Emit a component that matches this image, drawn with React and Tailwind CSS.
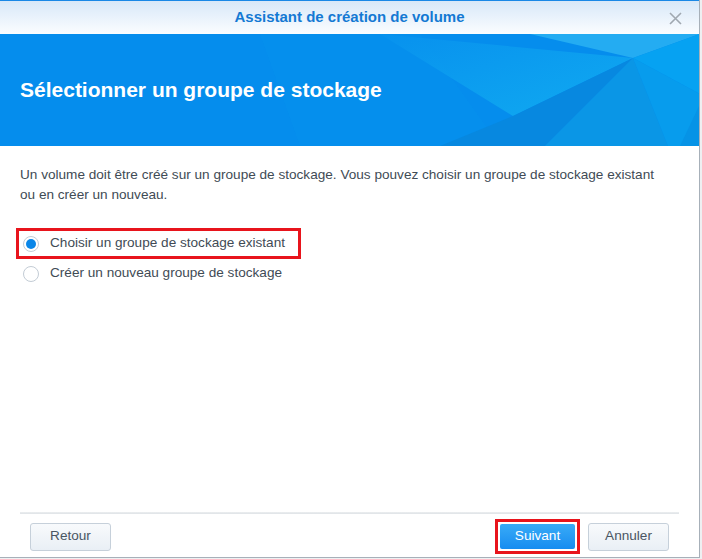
import React, { useState } from 'react';

// Fond du bandeau : facettes bleues dessinées en SVG
const BannerArt = () => (
  <svg className="absolute inset-0" width="700" height="112" viewBox="0 0 700 112" preserveAspectRatio="none">
    <defs>
      <linearGradient id="band" x1="0" y1="0" x2="1" y2="1">
        <stop offset="0" stopColor="#0892ee" />
        <stop offset="1" stopColor="#14b4f2" />
      </linearGradient>
    </defs>
    <rect width="700" height="112" fill="#058ded" />
    <polygon points="260,0 420,0 500,112 300,112" fill="#0692ee" opacity="0.5" />
    <polygon points="380,0 633,24 513,82" fill="url(#band)" opacity="0.75" />
    <polygon points="530,0 700,0 633,24" fill="#24acf2" />
    <polygon points="633,24 700,0 700,60" fill="#06a2f2" />
    <polygon points="513,82 633,24 545,112 440,112" fill="#0788e0" />
    <polygon points="545,112 633,24 668,112" fill="#0a96e6" />
    <polygon points="633,24 700,60 700,112 668,112" fill="#079ced" />
    <polygon points="680,112 700,70 700,112" fill="#0693e6" />
  </svg>
);

const Radio = ({ checked }) => (
  <span className="w-4 h-4 rounded-full border border-[#c3ccd5] bg-white flex items-center justify-center shrink-0">
    {checked && <span className="w-[10px] h-[10px] rounded-full bg-[#0a86e8]" />}
  </span>
);

const App = () => {
  const [choice, setChoice] = useState('existing'); // option sélectionnée

  return (
    <div className="w-[702px] h-[559px] bg-[#eef0f2] font-['Liberation_Sans',Arial,sans-serif]">
      <div className="w-[700px] h-[558px] flex flex-col bg-white border-r border-b border-[#a7b0b9]">
        {/* barre de titre */}
        <div className="h-[34px] shrink-0 relative flex items-center justify-center border-t border-[#1a88e6] bg-gradient-to-b from-[#d8e8f8] to-[#fbfdff]">
          <span className="text-[15px] font-bold text-[#1479d3]">Assistant de création de volume</span>
          <svg className="absolute right-[17px] top-[11px]" width="13" height="13" viewBox="0 0 13 13">
            <path d="M1 1 L12 12 M12 1 L1 12" stroke="#a0a8b0" strokeWidth="1.6" />
          </svg>
        </div>

        {/* bandeau */}
        <div className="h-[112px] shrink-0 relative overflow-hidden flex items-center">
          <BannerArt />
          <h1 className="relative pl-5 text-[21px] font-bold text-white">Sélectionner un groupe de stockage</h1>
        </div>

        {/* contenu */}
        <div className="flex-1 px-5 pt-[19px] text-[13.6px] text-[#414b55]">
          <p className="leading-5 whitespace-nowrap">
            Un volume doit être créé sur un groupe de stockage. Vous pouvez choisir un groupe de stockage existant
            <br />
            ou en créer un nouveau.
          </p>
          <div className="mt-[23px] -ml-1">
            <label
              onClick={() => setChoice('existing')}
              className="w-[285px] h-[31px] flex items-center gap-[11px] pl-[4px] border-[3px] border-[#e8141c] cursor-pointer"
            >
              <Radio checked={choice === 'existing'} />
              Choisir un groupe de stockage existant
            </label>
            <label
              onClick={() => setChoice('new')}
              className="h-[29px] flex items-center gap-[11px] pl-[7px] cursor-pointer"
            >
              <Radio checked={choice === 'new'} />
              Créer un nouveau groupe de stockage
            </label>
          </div>
        </div>

        {/* pied de page */}
        <div className="shrink-0">
          <div className="mx-5 h-[2px] bg-gradient-to-b from-[#eceef0] to-[#dfe3e7]" />
          <div className="h-[43px] flex items-center px-[30px] pt-[2px] text-[13.6px]">
            <button className="w-[81px] h-[28px] rounded-[3px] border border-[#c6d0da] bg-gradient-to-b from-[#f8fafc] to-[#e9eff5] text-[#4a5663]">
              Retour
            </button>
            <div className="ml-auto border-[3px] border-[#e8141c] p-[2px]">
              <button className="w-[75px] h-[25px] rounded-[2px] bg-gradient-to-b from-[#38abf7] to-[#168cf0] text-white">
                Suivant
              </button>
            </div>
            <button className="ml-[8px] w-[81px] h-[28px] rounded-[3px] border border-[#c6d0da] bg-gradient-to-b from-[#f8fafc] to-[#e9eff5] text-[#4a5663]">
              Annuler
            </button>
          </div>
        </div>
      </div>
    </div>
  );
};

export default App;
